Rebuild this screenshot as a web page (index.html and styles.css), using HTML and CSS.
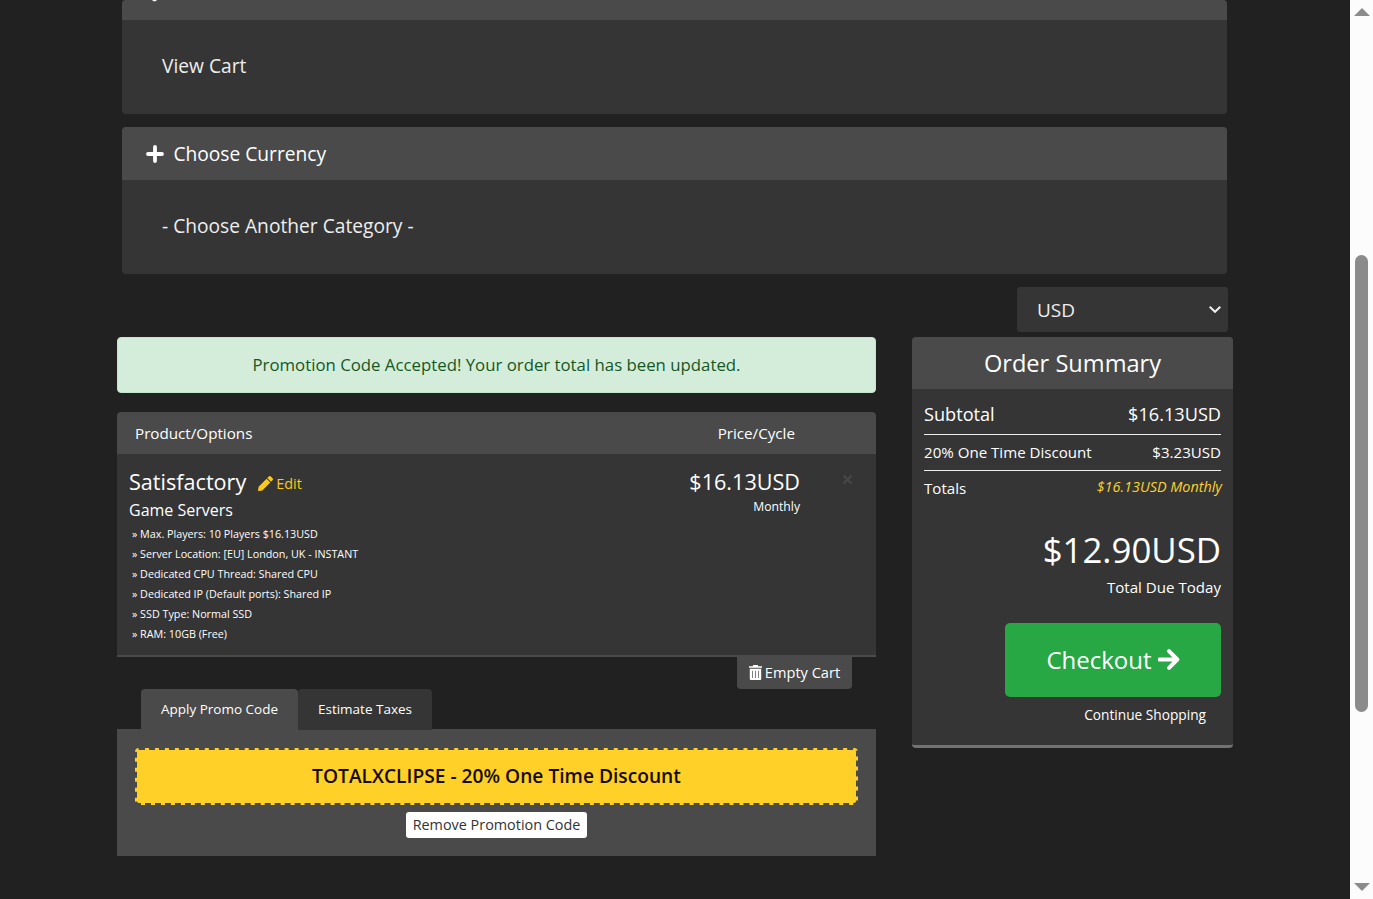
FILE: index.html
```html
<!DOCTYPE html>
<html lang="en">
<head>
<meta charset="utf-8">
<title>Review &amp; Checkout</title>
<link rel="stylesheet" href="styles.css">
</head>
<body>
<div class="window">
<main class="page">
  <section class="panel panel-first">
    <div class="panel-head head-cut"><svg class="head-dot" width="8" height="2" viewBox="0 0 8 2"><path d="M2 0h5L5.500 1.300H3.500z" fill="#fff"/></svg></div>
    <div class="panel-body">View Cart</div>
  </section>
  <section class="panel">
    <div class="panel-head">
      <svg class="plus" width="18" height="18" viewBox="0 0 18 18"><path d="M9 2v14M2 9h14" stroke="#fff" stroke-width="3.8" stroke-linecap="round"/></svg>
      <span class="t-currency">Choose Currency</span>
    </div>
    <div class="panel-body"><span class="t-category">- Choose Another Category -</span></div>
  </section>
  <div class="currency">
    <span>USD</span>
    <svg width="14" height="9" viewBox="0 0 14 9"><path d="M1.7 1.7L7 6.8l5.3-5.1" fill="none" stroke="#eee" stroke-width="2"/></svg>
  </div>
  <div class="columns">
    <div class="left">
      <div class="alert">Promotion Code Accepted! Your order total has been updated.</div>
      <div class="cart-head"><span>Product/Options</span><span class="price-head">Price/Cycle</span></div>
      <div class="cart-body">
        <div class="product">
          <div class="name-row"><span class="name">Satisfactory</span>
            <svg class="pencil" width="15" height="15" viewBox="0 0 512 512"><path fill="#fdc913" d="M498 142l-47 47c-5 5-12 5-17 0L323 78c-5-5-5-12 0-17l47-47c19-19 49-19 68 0l60 60c19 19 19 49 0 68zM284 101L22 363 0 485c-3 16 11 30 27 27l122-21 262-263c5-5 5-12 0-17L301 101c-5-5-12-5-17 0z"/></svg>
            <a class="edit">Edit</a></div>
          <div class="group">Game Servers</div>
          <ul class="options">
            <li>» Max. Players: 10 Players $16.13USD</li>
            <li>» Server Location: [EU] London, UK - INSTANT</li>
            <li>» Dedicated CPU Thread: Shared CPU</li>
            <li>» Dedicated IP (Default ports): Shared IP</li>
            <li>» SSD Type: Normal SSD</li>
            <li>» RAM: 10GB (Free)</li>
          </ul>
        </div>
        <div class="price"><span class="amount">$16.13USD</span><span class="cycle">Monthly</span></div>
        <svg class="remove" width="11" height="11" viewBox="0 0 11 11"><path d="M1.5 1.5l8 8M9.5 1.5l-8 8" stroke="#484848" stroke-width="2"/></svg>
      </div>
      <div class="empty-row"><a class="empty">
        <svg width="13" height="15" viewBox="0 0 13 15"><path fill="#fff" fill-rule="evenodd" d="M0 1.2h3.7L4.3 0h4.4l.6 1.2H13v1.6H0zM.8 3.8h11.4V14q0 1-1 1H1.800q-1 0-1-1zM3.300 5.700v7.400h.7V5.700zM6.150 5.700v7.400h.7V5.700zM9 5.700v7.400h.7V5.700z"/></svg>
        <span>Empty Cart</span></a></div>
      <div class="tabs"><a class="tab active">Apply Promo Code</a><a class="tab">Estimate Taxes</a></div>
      <div class="promo">
        <div class="code">TOTALXCLIPSE - 20% One Time Discount</div>
        <a class="remove-code">Remove Promotion Code</a>
      </div>
    </div>
    <aside class="summary">
      <h2>Order Summary</h2>
      <div class="lines">
        <div class="line subtotal"><span>Subtotal</span><span>$16.13USD</span></div>
        <div class="line discount"><span>20% One Time Discount</span><span>$3.23USD</span></div>
        <div class="line totals"><span>Totals</span><em>$16.13USD Monthly</em></div>
      </div>
      <div class="due">$12.90USD</div>
      <div class="due-label">Total Due Today</div>
      <a class="checkout"><span>Checkout</span>
        <svg width="22" height="21" viewBox="0 0 22 21"><path d="M1.500 10.500h17M11 2.200l8.300 8.300-8.300 8.300" fill="none" stroke="#fff" stroke-width="4" stroke-linecap="round" stroke-linejoin="round"/></svg></a>
      <a class="continue">Continue Shopping</a>
    </aside>
  </div>
</main>
<div class="scrollbar">
  <svg width="16" height="8" viewBox="0 0 16 8"><path d="M0 8L8 0l8 8z" fill="#8b8b8b"/></svg>
  <div class="thumb"></div>
  <svg width="16" height="8" viewBox="0 0 16 8"><path d="M0 0h16L8 8z" fill="#8b8b8b"/></svg>
</div>
</div>
</body>
</html>
```
FILE: styles.css
```css
* { box-sizing: border-box; }
body { margin: 0; font-family: "Open Sans", sans-serif; color: #fff; background: #212121; white-space: nowrap; }
.window { display: flex; width: 1373px; height: 899px; overflow: hidden; }
.page { width: 1350px; padding-left: 117px; }

.panel { width: 1105px; margin: 0 0 13px 5.400px; border-radius: 4px; overflow: hidden; background: #353535; font-size: 19.200px; }
.panel-head { display: flex; align-items: center; height: 53px; padding-left: 24px; gap: 9px; background: #4a4a4a; color: #fff; }
.head-cut { height: 20px; align-items: flex-start; padding-left: 28px; }
.panel-body { display: flex; align-items: center; height: 94px; padding: 0 0 4px 39.600px; color: #eee; }
.currency { display: flex; align-items: center; justify-content: space-between; width: 211px; height: 45px; margin: 0 0 5px 900px; padding: 0 6px 0 20px; border-radius: 3px; background: #353535; color: #eee; font-size: 19px; }

.columns { display: flex; align-items: flex-start; gap: 36px; }
.left { width: 759px; }
.alert { height: 56px; margin-bottom: 19px; border: 1px solid #c3e6cb; border-radius: 4px; background: #d4edda; color: #155724; font-size: 16.800px; line-height: 54px; text-align: center; }
.cart-head { display: flex; justify-content: space-between; height: 42px; padding: 0 81px 0 18px; border-radius: 4px 4px 0 0; background: #4a4a4a; font-size: 15.200px; line-height: 42px; }
.cart-body { display: flex; height: 203px; padding: 11px 23px 0 12px; border-bottom: 2px solid #4a4a4a; background: #353535; }
.product { flex: 1; }
.name-row { display: flex; align-items: center; height: 32px; }
.name { margin-right: 12px; font-size: 21.600px; }
.pencil { margin-top: 4px; }
.edit { margin-left: 3px; padding-top: 4px; color: #fdc913; font-size: 14.400px; }
.group { height: 24px; padding-top: 1px; font-size: 16px; line-height: 24px; }
.options { margin: 0; padding: 2.500px 0 0 3px; list-style: none; font-size: 10.750px; line-height: 20.160px; }
.price { display: flex; flex-direction: column; align-items: flex-end; }
.amount { padding-top: 1px; font-size: 21.600px; line-height: 32px; }
.cycle { font-size: 12.200px; line-height: 18px; }
.remove { margin: 9px 0 0 42px; }
.empty-row { display: flex; justify-content: flex-end; height: 32px; padding-right: 24px; }
.empty { display: flex; align-items: center; justify-content: center; gap: 3px; width: 115px; padding-bottom: 2px; border-radius: 0 0 4px 4px; background: #4a4a4a; font-size: 14.600px; }
.tabs { display: flex; height: 40px; padding-left: 24px; }
.tab { width: 134px; height: 41px; border-radius: 4px 4px 0 0; background: #353535; font-size: 13.500px; line-height: 41px; text-align: center; }
.tab.active { width: 157px; background: #4a4a4a; }
.promo { display: flex; flex-direction: column; align-items: center; gap: 7px; height: 127px; padding: 19px 18px 0; background: #4a4a4a; }
.code { width: 723px; height: 57px; border: 2px dashed #4a4a4a; border-radius: 4px; background: #ffd028; color: #150c00; font-size: 19.200px; font-weight: 600; line-height: 51px; text-align: center; }
.remove-code { width: 181px; height: 26px; border-radius: 3px; background: #fff; color: #333; font-size: 14.400px; line-height: 26px; text-align: center; }

.summary { display: flex; flex-direction: column; width: 321px; height: 411px; border-bottom: 3px solid #727272; border-radius: 4px; overflow: hidden; background: #353535; }
.summary h2 { height: 52px; margin: 0; background: #4a4a4a; font-size: 23.600px; font-weight: 400; line-height: 52px; text-align: center; }
.lines { padding: 8px 12px 0; }
.line { display: flex; justify-content: space-between; font-size: 15.100px; line-height: 35px; }
.subtotal { height: 38px; border-bottom: 1px solid #eee; font-size: 18.150px; }
.discount { height: 36px; border-bottom: 1px solid #eee; }
.totals { height: 52px; }
.totals em { margin-right: -1px; color: #fdd12b; font-size: 14.400px; line-height: 32px; }
.due { height: 53px; padding-right: 12px; font-size: 34.800px; line-height: 54px; text-align: right; }
.due-label { height: 47px; padding-right: 12px; font-size: 15.100px; line-height: 22px; text-align: right; }
.checkout { display: flex; align-items: center; justify-content: center; gap: 6px; align-self: flex-end; width: 216px; height: 74px; margin-right: 12px; padding-bottom: 1px; border-radius: 5px; background: #28a745; font-size: 24px; }
.continue { align-self: flex-end; margin: 5px 27px 0 0; font-size: 13.700px; line-height: 26px; }

.scrollbar { display: flex; flex-direction: column; align-items: center; width: 23px; height: 899px; padding-top: 8px; background: #fcfcfc; }
.thumb { width: 13px; height: 457px; margin: 239px 0 171px; border-radius: 7px; background: #8b8b8b; }
```
